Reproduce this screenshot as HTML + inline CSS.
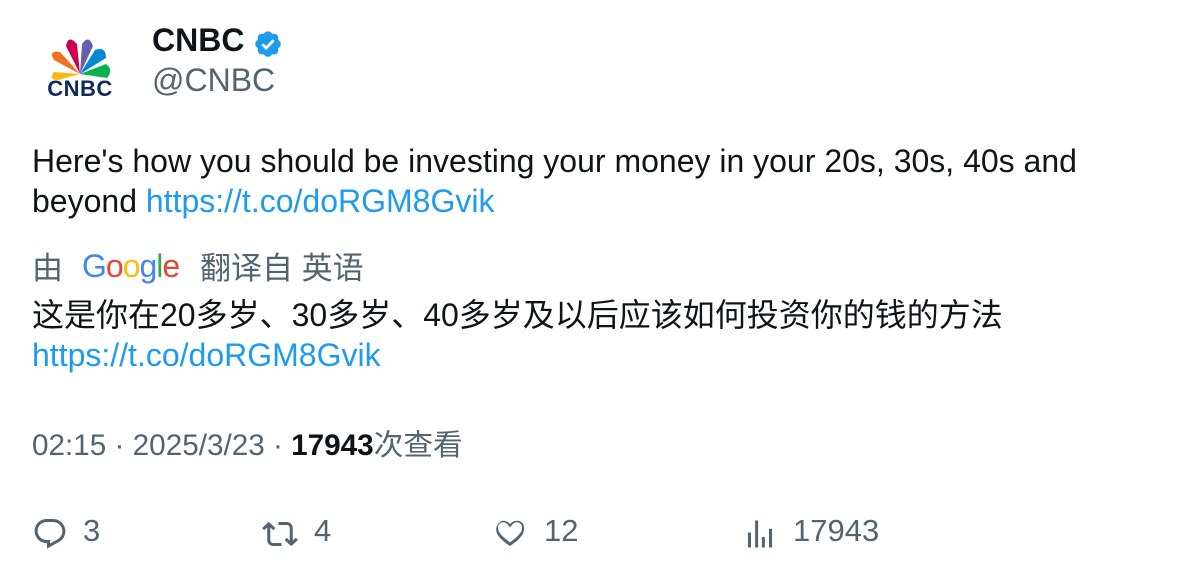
<!DOCTYPE html>
<html><head><meta charset="utf-8"><style>
body{margin:0;width:1196px;height:578px;background:#fff;font-family:"Liberation Sans","Noto Sans CJK SC",sans-serif;color:#0f1419;position:relative;overflow:hidden}
.a{position:absolute;white-space:nowrap}
.g{color:#536471}.l{color:#1d9bf0}
</style></head><body>
<svg class="a" style="left:44px;top:38px" width="72" height="62" viewBox="0 0 72 62">
<g transform="translate(36,36)">
<path d="M0 0 L-26 -2 Q-32 6 -22 6 Z" fill="#fcb711"/>
<path d="M0 0 L-26 -14 Q-32 -24 -20 -22 Z" fill="#f37021"/>
<path d="M0 0 L-14 -28 Q-12 -40 -3 -30 Z" fill="#cc004c"/>
<path d="M0 0 L2 -30 Q9 -40 13 -28 Z" fill="#6460aa"/>
<path d="M0 0 L15 -24 Q26 -28 26 -16 Z" fill="#0089d0"/>
<path d="M0 0 L26 -10 Q34 -4 27 4 Z" fill="#0db14b"/>
</g>
<text x="36" y="58" text-anchor="middle" font-family="Liberation Sans" font-weight="bold" font-size="22" fill="#0c2a5b" letter-spacing="0.5">CNBC</text>
</svg>
<div class="a" style="left:152px;top:22px;font-size:32px;font-weight:bold">CNBC</div>
<svg class="a" style="left:253px;top:29px" width="30" height="30" viewBox="0 0 24 24"><path fill="#1d9bf0" d="M22.25 12c0-1.43-.88-2.67-2.19-3.34.46-1.39.2-2.9-.81-3.91s-2.52-1.27-3.91-.81c-.66-1.31-1.91-2.19-3.34-2.19s-2.67.88-3.33 2.19c-1.4-.46-2.91-.2-3.92.81s-1.26 2.52-.8 3.91c-1.31.67-2.2 1.91-2.2 3.34s.89 2.67 2.2 3.34c-.46 1.39-.21 2.9.8 3.91s2.52 1.26 3.91.81c.67 1.31 1.91 2.19 3.34 2.19s2.68-.88 3.34-2.19c1.39.45 2.9.2 3.91-.81s1.27-2.52.81-3.91c1.31-.67 2.19-1.91 2.19-3.34z"/><path d="M7.5 12.2l3 3 6-6.2" stroke="#fff" stroke-width="2.2" fill="none"/></svg>
<div class="a g" style="left:152px;top:62px;font-size:32px">@CNBC</div>
<div class="a" style="left:32px;top:141px;font-size:32px;line-height:40px">Here's how you should be investing your money in your 20s, 30s, 40s and<br>beyond <span class="l">https://t.co/doRGM8Gvik</span></div>
<div class="a g" style="left:32px;top:243px;font-size:31px">由</div>
<div class="a" style="left:82px;top:248px;font-size:32px;letter-spacing:-1px"><span style="color:#4285f4">G</span><span style="color:#ea4335">o</span><span style="color:#fbbc05">o</span><span style="color:#4285f4">g</span><span style="color:#34a853">l</span><span style="color:#ea4335">e</span></div>
<div class="a g" style="left:200px;top:243px;font-size:31px">翻译自 英语</div>
<div class="a" style="left:32px;top:295px;font-size:32px;line-height:40px">这是你在20多岁、30多岁、40多岁及以后应该如何投资你的钱的方法<br><span class="l">https://t.co/doRGM8Gvik</span></div>
<div class="a g" style="left:32px;top:421px;font-size:29.7px">02:15 · 2025/3/23 · <b style="color:#0f1419">17943</b>次查看</div>
<svg class="a" style="left:32px;top:516px" width="36" height="36" viewBox="0 0 24 24"><path fill="#536471" d="M1.75 10c0-4.42 3.58-8 8-8h4.37c4.5 0 8.13 3.65 8.13 8.15 0 2.96-1.61 5.69-4.2 7.13l-8.05 4.46v-3.69h-.07c-4.49.1-8.18-3.51-8.18-8.05zm8-6c-3.32 0-6 2.69-6 6 0 3.37 2.77 6.08 6.14 6.01l.35-.01h1.76v2.3l5.1-2.82c1.96-1.09 3.15-3.14 3.15-5.33 0-3.39-2.74-6.15-6.13-6.15H9.75z"/></svg>
<div class="a g" style="left:83px;top:513px;font-size:31px">3</div>
<svg class="a" style="left:262px;top:516px" width="36" height="36" viewBox="0 0 24 24"><path fill="#536471" d="M4.5 3.88l4.43 4.14-1.36 1.46L5.5 7.55V16c0 1.1.9 2 2 2H13v2H7.5c-2.21 0-4-1.79-4-4V7.55L1.43 9.48.07 8.02 4.5 3.88zM16.5 6H11V4h5.5c2.21 0 4 1.79 4 4v8.45l2.07-1.93 1.36 1.46-4.43 4.14-4.43-4.14 1.36-1.46 2.07 1.93V8c0-1.1-.9-2-2-2z"/></svg>
<div class="a g" style="left:314px;top:513px;font-size:31px">4</div>
<svg class="a" style="left:492px;top:514px" width="36" height="36" viewBox="0 0 24 24"><path fill="#536471" d="M16.7 5.5c-1.11-.03-2.4.5-3.9 2.42L12 8.94l-.81-1.01C9.7 6 8.39 5.47 7.3 5.5c-1.13.03-2.1.64-2.72 1.55-1.4 2.05-.56 5.12 2.87 8.23 1.94 1.76 3.6 2.93 4.55 3.6.95-.67 2.61-1.84 4.55-3.6 3.43-3.11 4.27-6.18 2.87-8.23-.62-.91-1.59-1.52-2.72-1.55zM12 21.34l-.55-.37c-.81-.54-2.65-1.8-4.88-3.81C3 13.9 1.73 10.2 3.72 7.23 4.7 5.8 6.2 4.55 7.24 4.5c1.83-.05 3.38.68 4.76 2.23 1.38-1.55 2.93-2.28 4.76-2.23 1.73.05 3.13.89 4.02 2.23C22.27 10.2 21 13.9 17.43 17.16c-2.23 2.01-4.07 3.27-4.88 3.81l-.55.37z"/></svg>
<div class="a g" style="left:544px;top:513px;font-size:31px">12</div>
<svg class="a" style="left:742px;top:516px" width="36" height="36" viewBox="0 0 24 24"><path fill="#536471" d="M8.75 21V3h2v18h-2zM18 21V8.5h2V21h-2zM4 21l.004-10h2L6 21H4zm9.248 0v-7h2v7h-2z"/></svg>
<div class="a g" style="left:793px;top:513px;font-size:31px">17943</div>
</body></html>
